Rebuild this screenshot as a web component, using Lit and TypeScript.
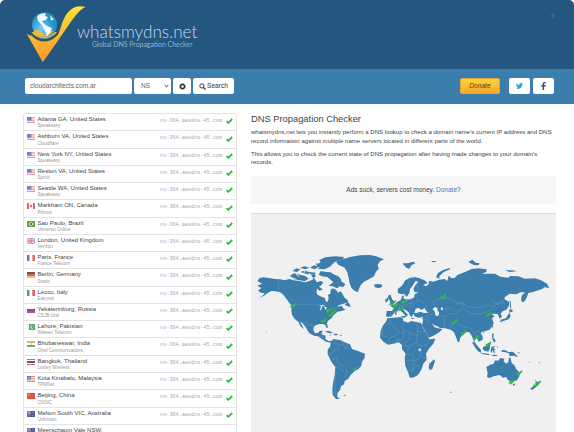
import { LitElement, html, css, svg } from "lit";
import { customElement } from "lit/decorators.js";

const rows: [string, string, string][] = [
  ["us", "Atlanta GA, United States", "Speakeasy"],
  ["us", "Ashburn VA, United States", "Cloudflare"],
  ["us", "New York NY, United States", "Speakeasy"],
  ["us", "Reston VA, United States", "Sprint"],
  ["us", "Seattle WA, United States", "Speakeasy"],
  ["ca", "Markham ON, Canada", "Primus"],
  ["br", "Sao Paulo, Brazil", "Universo Online"],
  ["gb", "London, United Kingdom", "Verizon"],
  ["fr", "Paris, France", "France Telecom"],
  ["de", "Berlin, Germany", "Strato"],
  ["it", "Lecco, Italy", "Easynet"],
  ["ru", "Yekaterinburg, Russia", "CSJB Ural"],
  ["pk", "Lahore, Pakistan", "Wateen Telecom"],
  ["in", "Bhubaneswar, India", "Ortel Communications"],
  ["th", "Bangkok, Thailand", "Loxley Wireless"],
  ["my", "Kota Kinabalu, Malaysia", "TPMNet"],
  ["cn", "Beijing, China", "CNNIC"],
  ["au", "Melton South VIC, Australia", "Unknown"],
  ["au", "Meerschaum Vale NSW,", ""],
];

const r = (x: number, y: number, w: number, h: number, f: string) =>
  svg`<rect x=${x} y=${y} width=${w} height=${h} fill=${f}></rect>`;
const stripesH = (c: string[]) => c.map((f, i) => r(0, (i * 10) / c.length, 16, 10 / c.length, f));
const stripesV = (c: string[]) => c.map((f, i) => r((i * 16) / c.length, 0, 16 / c.length, 10, f));

const flags: Record<string, unknown> = {
  us: [stripesH(["#e58f93", "#f6dcde", "#e58f93", "#f6dcde", "#e07b80", "#f6dcde", "#e07b80"]), r(0, 0, 9, 6, "#5f78c4")],
  ca: [stripesV(["#e2555c", "#fff", "#fff", "#e2555c"]), svg`<path d="M8 2l2.500 3L8 8 5.500 5z" fill="#e2404a"/>`],
  br: [r(0, 0, 16, 10, "#3f9a48"), svg`<path d="M8 1l6 4-6 4-6-4z" fill="#f0da4a"/><circle cx="8" cy="5" r="2" fill="#2f5aa0"/>`],
  gb: [r(0, 0, 16, 10, "#8085b8"), svg`<path d="M0 0l16 10M16 0L0 10" stroke="#f3dfe4" stroke-width="2"/><path d="M8 0v10M0 5h16" stroke="#f6e6ea" stroke-width="3.500"/><path d="M8 0v10M0 5h16" stroke="#dc5560" stroke-width="2"/>`],
  fr: stripesV(["#5068b8", "#fff", "#ea5a5a"]),
  de: stripesH(["#5a4a48", "#d8504a", "#f0c050"]),
  it: stripesV(["#35a05a", "#fff", "#e0525a"]),
  ru: stripesH(["#f4f4f8", "#3a50c8", "#dc3a48"]),
  pk: [r(0, 0, 16, 10, "#44a055"), r(0, 0, 4, 10, "#eef6ee"), svg`<circle cx="10" cy="5" r="3" fill="#fff"/><circle cx="11" cy="4.500" r="2.400" fill="#44a055"/>`],
  in: [stripesH(["#f0a850", "#fff", "#58a860"]), svg`<circle cx="8" cy="5" r="1.200" fill="#6070b0"/>`],
  th: stripesH(["#d85060", "#fff", "#3c4898", "#3c4898", "#fff", "#d85060"]),
  my: [stripesH(["#e07880", "#f6dcde", "#e07880", "#f6dcde", "#e07880"]), r(0, 0, 8, 6, "#6468a8"), svg`<circle cx="4" cy="3" r="1.500" fill="#e8d070"/>`],
  cn: [r(0, 0, 16, 10, "#e0402f"), svg`<circle cx="4" cy="3.500" r="1.600" fill="#f4c040"/>`],
  au: [r(0, 0, 16, 10, "#3c4c90"), svg`<path d="M0 0l8 6M8 0L0 6M4 0v6M0 3h8" stroke="#e0a0b0"/><circle cx="12" cy="3" r=".8" fill="#fff"/><circle cx="12" cy="7" r=".8" fill="#fff"/><circle cx="4" cy="8" r=".8" fill="#fff"/>`],
};

const pins = [
  [293, 306], [328.7, 310.3], [331, 314.5], [333.5, 312], [324, 320.3], [355.5, 368.6],
  [393, 302.7], [395, 305.5], [401, 308.3], [404.5, 301.6], [443.2, 296.3], [454.5, 322],
  [463.7, 332.5], [475.8, 337.5], [488.6, 314.3], [488.4, 344], [519.4, 372.8], [511.7, 381.8],
  [536.5, 384.5], [538, 382.8],
];

const americas = svg`
  <path d="M22 108L28 100 40 97 58 99 75 102 90 103 105 106 118 102 130 106 148 108 165 112 178 108 188 104 190 96 196 104 200 112 212 108 220 112 214 121 206 126 200 134 200 146 208 152 218 157 224 158 228 170 233 170 236 160 234 150 241 146 242 134 248 130 258 134 264 143 272 139 278 148 284 158 293 166 294 172 280 176 268 180 261 186 276 182 279 190 287 194 272 199 262 200 256 206 249 212 245 220 236 226 230 234 234 247 230 250 226 240 218 237 208 237 198 240 191 246 190 256 195 264 204 264 209 257 218 257 214 268 227 272 226 282 235 288 244 287 241 293 228 290 216 282 204 274 192 272 178 265 172 256 167 246 156 233 150 231 157 242 162 253 151 243 145 230 134 222 126 210 124 196 126 184 118 174 108 160 100 149 90 142 76 139 64 138 54 143 42 152 27 160 40 150 44 144 34 144 24 137 34 129 22 122 36 116Z"/>
  <path d="M242 290L250 282 272 286 284 292 300 298 306 312 324 318 345 326 344 338 336 350 334 362 326 372 314 378 302 390 294 402 284 408 282 418 273 424 270 436 262 444 262 456 270 462 258 462 248 450 247 430 250 410 254 390 256 366 244 350 233 328 233 314 241 304Z"/>
  <path d="M120 92l12-7 18 4 16 4 10 8-12 8-14-3-16-2zM127 78l12-8 12 3-10 8zM150 68l14-4 14 4-12 5zM152 80l12-3 14 4 20 2-6 7-20-3-12-2zM180 68l12-7 14 4-12 8zM208 45l18-8 30-3 26 2-4 8-24 7-14 14-16 8-22-2 12-8-12-6 10-5zM198 55l10 2 6 8-12 2zM212 78l12 2 18 2 8 6 14 5 8 8 2 8 12 9-6 8-12-2-6 6-14-6-12-2 8-6 6-4-8-8-10-8-16-2-10-5zM184 90l10-2 4 7-10 3zM202 122l10 6 6 6-10 3-6-5zM284 180l10-10 6 9 2 7-8-2zM224 260l12-3 14 7-10 1zM250 266l10 0 6 4-12 1zM238 269l6 1-4 2zM270 270h5v2h-5zM48 261l3 1-2 2zM280 450l8-1-3 4zM196 240l5-4 4 3z"/>
  <path d="M207 183l10-4 10 4-10 1-4 12-3-1 3-11zM222 185l8 2-2 9zM228 198l10-4-2 4z" fill="#f0f0f1"/>
  <path d="M118 98l14 2 8 4M138 88l10 6M164 78l-4 10 14 6M178 84l4 12" fill="none" stroke="#f0f0f1" stroke-width="2.500"/>
  <path class="border" d="M86 103v36l10 4 10 16M124 178h82l14 7M232 198l14-8h14M140 229l16 4 14 1 8 8 8-2 8 10M220 272l-6 8M252 284l2 12 12 5 0 12-14 2-8 12-8-2M266 300l14-2 6 12 18-2M246 348l12-12 4 14 16 12 10 12 4 14-8 10M259 366l8 0 6 8 10 4M258 380l-4 40 1 34M278 290v10M290 294l2 12"/>`;

const oldWorld = svg`
  <path d="M-42 50L-20 42 0 36 30 31 60 30 78 34 102 43 90 49 83 60 86 72 78 80 72 94 58 102 42 110 34 118 28 128 24 141 14 138 4 128-2 112-4 98-8 82-16 68-34 60Z"/>
  <path d="M72 119l8-2 14 1 3 7-10 5-12-3zM158 55l14 0 18-5 6 5-12 6-6 10-8-2-8-8zM245 48h12v3h-12zM258 96l6-12 14-8 20-7 2 4-20 9-12 12 0 8zM116 150l6-1 2 8 4 8 7 6-4 6-16 3 6-6-2-8-6-6zM106 162l8-3 1 8-8 6zM154 212l14 2-4 5-10-4zM136 197l4 0-1 13-4-1zM183 220h10v2h-10zM213 220l7-2-2 4zM300 440h4v3h-4z"/>
  <path d="M144 144L143 132 156 122 166 106 180 98 196 97 210 100 206 108 196 109 188 122 180 132 178 144 170 156 162 146 154 148Z"/>
  <path d="M108 214L110 198 126 198 131 190 120 182 134 178 142 170 152 166 156 154 162 150 160 160 170 164 182 162 192 158 194 147 206 143 194 141 190 131 196 121 204 112 200 104 208 100 224 106 233 114 219 120 228 124 236 118 237 107 250 110 268 104 284 102 292 108 296 92 305 100 315 98 322 90 347 80 365 72 385 70 409 73 410 80 396 87 413 86 435 86 451 95 475 98 480 93 505 94 525 101 555 100 573 106 591 116 598 129 583 127 577 132 565 136 547 142 535 144 530 158 522 171 513 166 515 152 525 142 511 142 499 148 479 146 465 156 463 162 477 170 477 182 469 194 458 199 452 206 456 216 449 221 443 208 433 206 425 207 434 214 426 220 431 234 427 244 419 254 407 258 397 260 392 264 398 274 398 284 386 290 381 280 375 278 374 290 382 304 374 298 370 284 365 272 358 262 349 261 339 270 331 277 328 292 323 290 317 274 312 262 302 254 286 250 270 249 262 244 252 240 244 234 254 247 264 250 277 252 268 262 250 272 236 278 230 268 222 252 216 241 219 226 219 216 204 218 194 214 190 206 186 216 180 212 176 202 166 194 158 191 168 203 174 210 168 215 160 205 150 196 142 197 132 204 126 213 116 216Z"/>
  <path d="M112 220L132 218 150 216 158 218 160 228 174 233 184 228 202 232 213 234 222 254 230 268 238 283 256 281 250 296 236 312 228 326 230 344 220 356 214 374 204 390 192 397 180 399 174 382 166 362 164 340 167 326 156 312 156 300 146 292 130 296 114 299 100 290 90 278 92 258 98 242 108 230ZM238 356l14-13 3 5-8 24-7 3-4-7z"/>
  <path d="M193 203l4-11 8-4 9 7 10-6 2 5 8 9-12 1-12-4-10 4zM254 186l9 3-1 7 6 7-4 11-8-3-2-12-6-6zM206 310l7 2-2 8-5-3zM272 188l6-1 1 7-5 2z" fill="#f0f0f1"/>
  <path class="border" d="M124 222l-4 12-22 14M120 236l28 28 14-4M160 228l-2 26 20 8 24 10v-40M202 260h24M98 248v24l18 2M148 264l-16 10-14 4v18M162 262l-4 22-18 2-6 10M178 264l0 18-18 14M202 272l-4 22-20 8-16 0M198 294l14 8 18-1 10-16M168 328h20l4 18h-26M212 302l2 22-12 20-10 4-4 26-18 2M230 340l-18-6M188 374l10-10 14 0M178 302l-4 16M188 328l10-18M128 198l18 2M142 172l8 10-2 12M158 164l4 20 12 2M184 162l2 12-22 6M174 186l20-6 10-14-8-14M204 166l18 8 10 10M200 104l4 32M180 102l-12 34M232 202l12 8 8-6M218 220l14 4 6 14M232 204l2 18M264 212l18 2 2 34M284 214l18-8 14 0M254 182l-6-12 18-8 26-4 24 14 26 4M284 194l16-6 14 12M302 252l6-20 12-8M315 226l8 12 22 10 14-2M319 176l22 2 16 8 28 2 30-8 14 4 16-10 18-8M341 178l-4 14-20 12M341 190l22 14 28 4 30-12 14-12M424 164l18 14 22-4M363 250l8 14 10-6 14 4M371 264l12 14 8-4"/>`;

const eastIsles = svg`
  <path d="M40 51l12-7 10 9 12 2-4 6-14-1zM150 76h24l12 3-22 2zM206 154l6-15 4-1-2 14-10 20-5-3zM164 164l3 6 2 20-3-1-2-16zM162 194l6-2 7 6-11 5zM164 204l3 10-6 9-16 5-10 4 2-8 16-4 7-12zM112 240l3 2-2 10zM84 262l5 0-3 4zM112 264l4 2-1 12 7 8-3 7-5-5-3-12zM50 290l8 3 10 10 10 12 0 9-10-6-10-14zM78 324l12 1 14 3-1 3-22-4zM84 306l8-3 8-10 6 3-2 16-4 8-12-3-5-5zM109 306l14-4-8 6 7 6-5 1 3 9-4-1-3-7-4 8-2-6zM108 330l12-1 10 2-12 3zM126 303l3 4-2 4zM140 315l12 1 8 5 14-1 10 10 6 6-16-4-10 2-2-9-10-3-12-2zM188 323l6-2-2 6zM202 332l3 4zM220 350l6 4-3 0zM250 354l6-4-3 5zM172 416l9 0-4 8zM240 402l5 8 10 1-9 14-2-8zM238 421l6 4-12 9-7-2z"/>
  <path d="M94 366L104 360 116 356 120 346 130 347 136 339 148 341 146 349 154 356 160 352 162 338 166 338 170 354 178 360 184 373 195 384 193 394 186 406 170 412 158 404 154 396 144 398 134 390 116 394 104 399 96 396 98 384Z"/>`;

@customElement("app-root")
export class AppRoot extends LitElement {
  static styles = css`
    :host { display: block; width: 574px; height: 432px; overflow: hidden; background: #fff; color: #444;
      font: 6px/8.5px "Liberation Sans", Arial, sans-serif; }
    * { box-sizing: border-box; }
    svg { display: block; flex: none; }
    .page { height: 432px; overflow: hidden; border-radius: 5px 5px 0 0; }
    .head { position: relative; height: 69px; background: #25567f; display: flex; }
    .mark { margin-left: 25px; }
    .brand { margin: 22px 0 0 -9px; color: #c0d9eb; font-family: Lato, sans-serif; font-weight: 300; white-space: nowrap; }
    .name { font-size: 17.8px; line-height: 18px; height: 18px; transform: scaleX(.965); transform-origin: 0 0; }
    .tag { font-size: 6.9px; line-height: 9px; margin: 0 0 0 15px; color: #8cb3d1; font-weight: 400; }
    .dot { position: absolute; left: 551px; top: 13px; width: 4px; height: 5px; border-radius: 50%; background: #36658f; }
    .bar { height: 35px; background: #3b7eae; display: flex; padding: 9px 20px 0 25px; }
    .ctl { height: 16px; background: #fff; border-radius: 2px; margin-right: 2px; display: flex; align-items: center;
      justify-content: center; font-size: 6.6px; color: #333; gap: 1px; white-space: nowrap; }
    .query { width: 107px; justify-content: flex-start; padding-left: 5px; color: #666; }
    .type { width: 37px; justify-content: space-between; padding: 0 2px 0 7px; color: #666; }
    .gear { width: 18px; }
    .search { width: 41px; }
    .donate { width: 40px; height: 15.500px; padding-top: 1px; margin-left: auto; margin-right: 9px; font-size: 6.6px; font-style: italic; color: #5b4517;
      background: linear-gradient(#fcd53a, #f9a526); border: 1px solid #e3a83a; }
    .social { width: 21px; margin-right: 3px; }
    .social:last-child { margin-right: 0; }
    .main { display: flex; height: 328px; overflow: hidden; background: linear-gradient(#f6fcfe, #fff 7px); }
    .list { width: 214px; margin: 9px 0 0 23px; border: 1px solid #e4e4e4; border-radius: 2px 2px 0 0; height: 340px; background: #fff; flex: none; }
    .row { height: 17.27px; border-bottom: 1px solid #e4e4e4; display: flex; padding: 0 3px; }
    .flag { margin: 3px 2.500px 0 0; opacity: .9; }
    .place { flex: 1; white-space: nowrap; color: #444; }
    .city { line-height: 7px; margin-top: 2px; }
    .isp { font-size: 4.6px; line-height: 5px; color: #999; margin-top: .3px; }
    .host { font: 5.17px/7px "Liberation Mono", monospace; color: #9caabd; margin: 4px 4px 0 0; }
    .ok { margin-top: 4.300px; }
    .info { margin-left: 14px; width: 305px; flex: none; }
    .title { font-size: 9.33px; line-height: 12px; margin: 8.500px 0 0; font-weight: 400; color: #444; }
    .text { margin: 3.5px 0 4.5px; white-space: nowrap; font-size: 6.06px; }
    .ads { height: 28px; background: #f6f6f7; display: flex; align-items: center; justify-content: center; font-size: 6.52px; margin-top: 9px; padding: 1px 0 0; white-space: pre; }
    .link { color: #3b80c0; }
    .map { margin-top: 9px; width: 305px; height: 224px; background: #f0f0f1; border-top: 1px solid #dcdcdc; }
    .border { fill: none; stroke: #76a8cb; stroke-width: 1.1; }
  `;

  tick(w: number) {
    return svg`<path d="M.6 3.100L2.300 4.800 6.200 1" transform="scale(${w})" fill="none" stroke="#2fbd3c" stroke-width="1.800"/>`;
  }

  render() {
    return html`<div class="page">
      <header class="head">
        <svg class="mark" width="61" height="66" viewBox="25 0 61 66">
          <defs>
            <linearGradient id="gold" x1="0" y1="0" x2="0" y2="1"><stop stop-color="#fde335"/><stop offset="1" stop-color="#f8962b"/></linearGradient>
            <radialGradient id="sea" cx=".4" cy=".65"><stop stop-color="#74d6f7"/><stop offset="1" stop-color="#248fc8"/></radialGradient>
          </defs>
          <path d="M26.700 33.700L30 35.500H57.500C59.500 31 61 26 63.300 20.300C66 14 70 9 75.300 7C78.500 6 82 6.200 85.500 7C79 10 74 17.500 68.700 25L55.300 44.500L42.700 62.300Z" fill="url(#gold)"/>
          <circle cx="44.300" cy="25.300" r="16.200" fill="#25567f"/>
          <path d="M31.500 32.500Q44 27 57 32.500Q51 38.500 44.500 38.700Q36.500 38.500 31.500 32.500Z" fill="#f7b52c"/>
          <circle cx="44.500" cy="24.700" r="12.500" fill="url(#sea)"/>
          <path d="M33.500 31Q38 28.500 42 32L45 35.500 48 33 54 30Q50 37 43.500 37Q36.500 36 33.500 31Z" fill="#eebb3c"/>
          <path d="M37 17Q40 12.500 46 13.500L45 16 48 17 46 20 42 21 44 24 48 26.500 52 28 50.500 32 47 36.500 45 31 42 25 38 21ZM50 15.500l4 4-3 1z" fill="#f4fbfe"/>
        </svg>
        <div class="brand"><div class="name">whatsmydns.net</div><div class="tag">Global DNS Propagation Checker</div></div>
        <div class="dot"></div>
      </header>
      <div class="bar">
        <div class="ctl query">cloudarchitects.com.ar</div>
        <div class="ctl type">NS<svg width="5" height="4" viewBox="0 0 5 4"><path d="M.7 1l1.800 1.800L4.300 1" fill="none" stroke="#333"/></svg></div>
        <div class="ctl gear"><svg width="7" height="7" viewBox="-4 -4 8 8"><circle r="2.300" fill="none" stroke="#333" stroke-width="1.600"/><circle r="3.200" fill="none" stroke="#333" stroke-width="1" stroke-dasharray="1.250 1.260"/></svg></div>
        <div class="ctl search"><svg width="7" height="7" viewBox="0 0 7 7"><circle cx="2.900" cy="2.900" r="2.100" fill="none" stroke="#333"/><path d="M4.400 4.400l2.100 2.100" stroke="#333" stroke-width="1.300"/></svg>Search</div>
        <div class="ctl donate">Donate</div>
        <div class="ctl social"><svg width="7" height="6" viewBox="0 0 24 20"><path d="M24 2.400l-3 2.500C21 14 15 20 7.500 20 4.600 20 2 19 0 17.700c2.700.3 5.200-.5 7.100-2-2.200 0-4-1.500-4.600-3.400h2.200C2.300 11.800.7 9.800.7 7.400l2.300.6C.8 6.400.1 3.500 1.500 1.200c2.500 3 6.200 5 10.300 5.100C11 3 13.500 0 16.700 0c1.400 0 2.700.6 3.600 1.500L23.400.4l-2.100 2.700z" fill="#36a3dc"/></svg></div>
        <div class="ctl social"><svg width="5" height="8" viewBox="0 0 10 18"><path d="M3 18V10H0V7h3V4.500Q3 0 7 0h3v3H8Q6.400 3 6.400 5v2H10l-.5 3H6.400v8z" fill="#35479b"/></svg></div>
      </div>
      <div class="main">
        <div class="list">
          ${rows.map(([f, city, isp], i) => html`<div class="row">
            <svg class="flag" width="8" height="6" viewBox="0 0 16 10" preserveAspectRatio="none">${flags[f]}</svg>
            <div class="place"><div class="city">${city}</div><div class="isp">${isp}</div></div>
            ${i < 18 ? html`<div class="host">ns-364.awsdns-45.com</div><svg class="ok" width="7" height="6" viewBox="0 0 7 6">${this.tick(1)}</svg>` : ""}
          </div>`)}
        </div>
        <div class="info">
          <h1 class="title">DNS Propagation Checker</h1>
          <p class="text">whatsmydns.net lets you instantly perform a DNS lookup to check a domain name's current IP address and DNS<br>record information against multiple name servers located in different parts of the world.</p>
          <p class="text">This allows you to check the current state of DNS propagation after having made changes to your domain's<br>records.</p>
          <div class="ads">Ads suck, servers cost money. <span class="link">Donate</span>?</div>
          <div class="map"><svg width="305" height="223" viewBox="251 214 305 223">
            <g fill="#3b7eae">
              <g transform="translate(250 245) scale(.33333)">${americas}</g>
              <g transform="translate(350 245) scale(.33333)">${oldWorld}</g>
              <g transform="translate(455 245) scale(.33333)">${eastIsles}</g>
            </g>
            ${pins.map(([x, y]) => svg`<g transform="translate(${x - 3.2} ${y - 2.9})">${this.tick(0.95)}</g>`)}
          </svg></div>
        </div>
      </div>
    </div>`;
  }
}
